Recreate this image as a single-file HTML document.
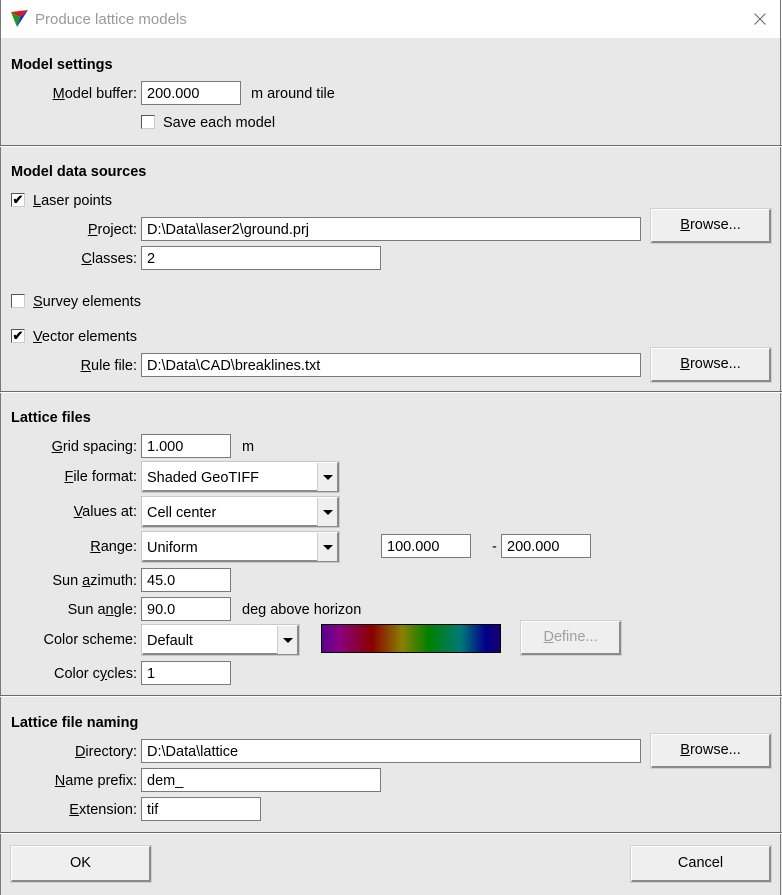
<!DOCTYPE html>
<html><head><meta charset="utf-8"><style>
*{margin:0;padding:0;box-sizing:border-box}
body{width:782px;height:895px;background:#e8e8e8;font-family:"Liberation Sans",sans-serif;font-size:14.5px;color:#000;position:relative;overflow:hidden}
.a{position:absolute;white-space:nowrap;line-height:18px;margin-top:1px}
.r{text-align:right;width:137px;left:0}
.h{font-weight:bold}
.in{position:absolute;background:#fff;border:1px solid #7a7a7a;height:24px;padding:3px 5px 1px;line-height:18px;white-space:nowrap}
.bt{position:absolute;background:#efefef;border:1px solid #fff;border-right:2px solid #8a8a8a;border-bottom:2px solid #8a8a8a;outline:1px solid #d0d0d0;text-align:center;line-height:30px}
.cb{position:absolute;width:14px;height:14px;background:#fff;border:1px solid #555;border-right-color:#ccc;border-bottom-color:#ccc;font-size:13px;line-height:12px;text-align:center;font-weight:bold}
.ln{position:absolute;left:0;width:782px;height:2px;background:#6a6a6a;border-bottom:1px solid #fff}
.co{position:absolute;background:#fff;border:1px solid #fff;border-right:2px solid #8a8a8a;border-bottom:2px solid #8a8a8a;outline:1px solid #c8c8c8;height:30px;padding:6px 4px 4px;line-height:18px}
.co .ar{position:absolute;right:0;top:0;width:20px;height:28px;background:#efefef;border-left:1px solid #ccc}
.co .ar:after{content:"";position:absolute;left:5px;top:12px;border-left:5px solid transparent;border-right:5px solid transparent;border-top:5px solid #000}
u{text-decoration:underline}
</style></head><body>
<div style="position:absolute;left:0;top:0;width:782px;height:38px;background:#fff"></div>
<div style="position:absolute;left:0;top:0;width:1px;height:895px;background:#777"></div>
<div style="position:absolute;right:1px;top:0;width:1px;height:895px;background:#777"></div>
<svg style="position:absolute;left:10px;top:9px" width="20" height="20" viewBox="0 0 20 20"><polygon points="1,3 10,8 7,18" fill="#1a9a1a"/><polygon points="10,8 18,1 7,18" fill="#1030e0"/><polygon points="1,3 18,1 10,8" fill="#e01818"/></svg>
<div class="a" style="left:35px;top:10px;color:#9a9a9a;font-size:15px">Produce lattice models</div>
<svg style="position:absolute;left:754px;top:13px" width="12" height="12" viewBox="0 0 12 12"><path d="M0.5 0.5L11.5 11.5M11.5 0.5L0.5 11.5" stroke="#666" stroke-width="1"/></svg>

<div class="a h" style="left:11px;top:55px">Model settings</div>
<div class="a r" style="top:84px"><u>M</u>odel buffer:</div>
<div class="in" style="left:141px;top:81px;width:100px">200.000</div>
<div class="a" style="left:251px;top:84px">m around tile</div>
<div class="cb" style="left:141px;top:115px"></div>
<div class="a" style="left:163px;top:113px">Save each model</div>
<div class="ln" style="top:145px"></div>

<div class="a h" style="left:11px;top:162px">Model data sources</div>
<div class="cb" style="left:11px;top:193px">✔</div>
<div class="a" style="left:33px;top:191px"><u>L</u>aser points</div>
<div class="a r" style="top:220px"><u>P</u>roject:</div>
<div class="in" style="left:141px;top:217px;width:500px">D:\Data\laser2\ground.prj</div>
<div class="bt" style="left:651px;top:209px;width:120px;height:34px"><u>B</u>rowse...</div>
<div class="a r" style="top:249px"><u>C</u>lasses:</div>
<div class="in" style="left:141px;top:246px;width:240px">2</div>
<div class="cb" style="left:11px;top:294px"></div>
<div class="a" style="left:33px;top:292px"><u>S</u>urvey elements</div>
<div class="cb" style="left:11px;top:329px">✔</div>
<div class="a" style="left:33px;top:327px"><u>V</u>ector elements</div>
<div class="a r" style="top:356px"><u>R</u>ule file:</div>
<div class="in" style="left:141px;top:353px;width:500px">D:\Data\CAD\breaklines.txt</div>
<div class="bt" style="left:651px;top:348px;width:120px;height:34px"><u>B</u>rowse...</div>
<div class="ln" style="top:391px"></div>

<div class="a h" style="left:11px;top:408px">Lattice files</div>
<div class="a r" style="top:437px"><u>G</u>rid spacing:</div>
<div class="in" style="left:141px;top:434px;width:90px">1.000</div>
<div class="a" style="left:242px;top:437px">m</div>
<div class="a r" style="top:467px"><u>F</u>ile format:</div>
<div class="co" style="left:142px;top:462px;width:197px">Shaded GeoTIFF<div class="ar"></div></div>
<div class="a r" style="top:502px"><u>V</u>alues at:</div>
<div class="co" style="left:142px;top:497px;width:197px">Cell center<div class="ar"></div></div>
<div class="a r" style="top:537px"><u>R</u>ange:</div>
<div class="co" style="left:142px;top:532px;width:197px">Uniform<div class="ar"></div></div>
<div class="in" style="left:381px;top:534px;width:90px">100.000</div>
<div class="a" style="left:492px;top:537px">-</div>
<div class="in" style="left:501px;top:534px;width:90px">200.000</div>
<div class="a r" style="top:571px">Sun <u>a</u>zimuth:</div>
<div class="in" style="left:141px;top:568px;width:90px">45.0</div>
<div class="a r" style="top:600px">Sun a<u>n</u>gle:</div>
<div class="in" style="left:141px;top:597px;width:90px">90.0</div>
<div class="a" style="left:242px;top:600px">deg above horizon</div>
<div class="a r" style="top:630px">Color scheme:</div>
<div class="co" style="left:142px;top:625px;width:157px">Default<div class="ar"></div></div>
<div style="position:absolute;left:321px;top:624px;width:180px;height:29px;border:1px solid #000;background:linear-gradient(to right,#5a0090 0%,#8a0080 10%,#8a0000 28%,#8a8000 45%,#008000 60%,#007878 78%,#00008a 92%,#1a0070 100%)"></div>
<div class="bt" style="left:521px;top:621px;width:100px;height:34px;color:#a0a0a0"><u>D</u>efine...</div>
<div class="a r" style="top:664px">Color c<u>y</u>cles:</div>
<div class="in" style="left:141px;top:661px;width:90px">1</div>
<div class="ln" style="top:695px"></div>

<div class="a h" style="left:11px;top:713px">Lattice file naming</div>
<div class="a r" style="top:742px"><u>D</u>irectory:</div>
<div class="in" style="left:141px;top:739px;width:500px">D:\Data\lattice</div>
<div class="bt" style="left:651px;top:734px;width:120px;height:34px"><u>B</u>rowse...</div>
<div class="a r" style="top:771px"><u>N</u>ame prefix:</div>
<div class="in" style="left:141px;top:768px;width:240px">dem_</div>
<div class="a r" style="top:800px"><u>E</u>xtension:</div>
<div class="in" style="left:141px;top:797px;width:120px">tif</div>
<div class="ln" style="top:832px"></div>

<div class="bt" style="left:11px;top:846px;width:140px;height:36px;line-height:33px">OK</div>
<div class="bt" style="left:631px;top:846px;width:140px;height:36px;line-height:33px">Cancel</div>
</body></html>
